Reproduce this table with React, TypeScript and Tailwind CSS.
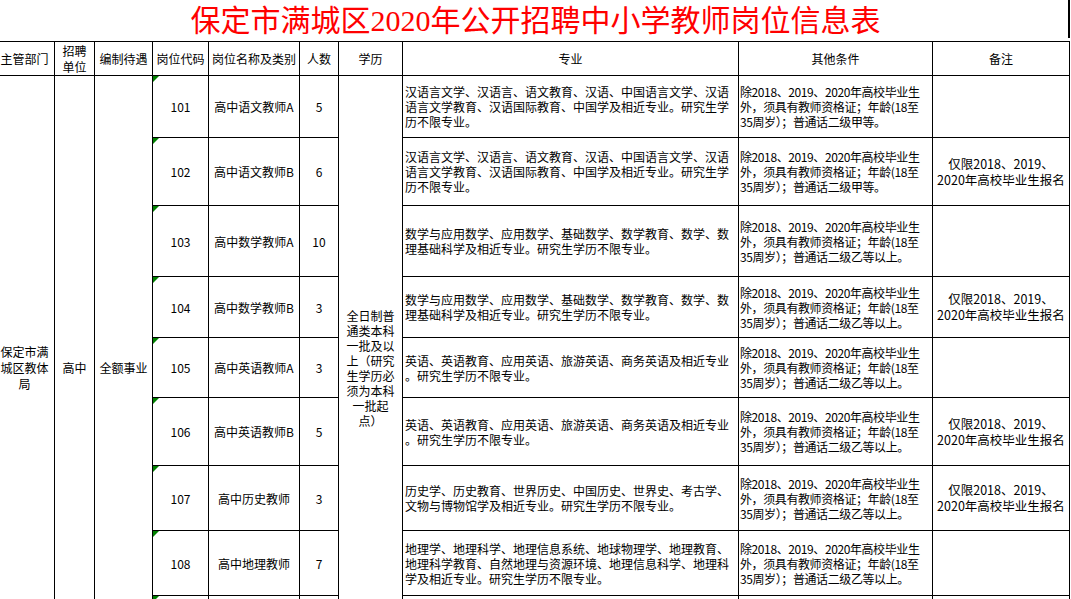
import React from "react";

interface Post {
  code: string;
  name: string;
  count: string;
  major: string[];
  extra: string[];
  note?: string[];
}

const cnFont = { fontFamily: '"Noto Sans CJK SC", "Noto Sans", sans-serif' };

const onlyGrads = ["仅限2018、2019、", "2020年高校毕业生报名"];

const grade = (level: string) => [
  "除2018、2019、2020年高校毕业生",
  "外，须具有教师资格证；年龄(18至",
  `35周岁）；普通话${level}。`,
];

const posts: Post[] = [
  {
    code: "101",
    name: "高中语文教师A",
    count: "5",
    major: [
      "汉语言文学、汉语言、语文教育、汉语、中国语言文学、汉语",
      "语言文学教育、汉语国际教育、中国学及相近专业。研究生学",
      "历不限专业。",
    ],
    extra: grade("二级甲等"),
  },
  {
    code: "102",
    name: "高中语文教师B",
    count: "6",
    major: [
      "汉语言文学、汉语言、语文教育、汉语、中国语言文学、汉语",
      "语言文学教育、汉语国际教育、中国学及相近专业。研究生学",
      "历不限专业。",
    ],
    extra: grade("二级甲等"),
    note: onlyGrads,
  },
  {
    code: "103",
    name: "高中数学教师A",
    count: "10",
    major: [
      "数学与应用数学、应用数学、基础数学、数学教育、数学、数",
      "理基础科学及相近专业。研究生学历不限专业。",
    ],
    extra: grade("二级乙等以上"),
  },
  {
    code: "104",
    name: "高中数学教师B",
    count: "3",
    major: [
      "数学与应用数学、应用数学、基础数学、数学教育、数学、数",
      "理基础科学及相近专业。研究生学历不限专业。",
    ],
    extra: grade("二级乙等以上"),
    note: onlyGrads,
  },
  {
    code: "105",
    name: "高中英语教师A",
    count: "3",
    major: [
      "英语、英语教育、应用英语、旅游英语、商务英语及相近专业",
      "。研究生学历不限专业。",
    ],
    extra: grade("二级乙等以上"),
  },
  {
    code: "106",
    name: "高中英语教师B",
    count: "5",
    major: [
      "英语、英语教育、应用英语、旅游英语、商务英语及相近专业",
      "。研究生学历不限专业。",
    ],
    extra: grade("二级乙等以上"),
    note: onlyGrads,
  },
  {
    code: "107",
    name: "高中历史教师",
    count: "3",
    major: [
      "历史学、历史教育、世界历史、中国历史、世界史、考古学、",
      "文物与博物馆学及相近专业。研究生学历不限专业。",
    ],
    extra: grade("二级乙等以上"),
    note: onlyGrads,
  },
  {
    code: "108",
    name: "高中地理教师",
    count: "7",
    major: [
      "地理学、地理科学、地理信息系统、地球物理学、地理教育、",
      "地理科学教育、自然地理与资源环境、地理信息科学、地理科",
      "学及相近专业。研究生学历不限专业。",
    ],
    extra: grade("二级乙等以上"),
  },
  // next row only shows its top border in the shot
  { code: "", name: "", count: "", major: [], extra: [] },
];

const headers = [
  "主管部门",
  "招聘单位",
  "编制待遇",
  "岗位代码",
  "岗位名称及类别",
  "人数",
  "学历",
  "专业",
  "其他条件",
  "备注",
];

const degree = ["全日制普", "通类本科", "一批及以", "上（研究", "生学历必", "须为本科", "一批起", "点）"];

const Lines = ({ lines }: { lines: string[] }) => (
  <>
    {lines.map((l, i) => (
      <div key={i} className="whitespace-nowrap">
        {l}
      </div>
    ))}
  </>
);

const Corner = () => (
  <svg className="absolute left-0 top-0" width="6" height="6" viewBox="0 0 6 6">
    <polygon points="0,0 6,0 0,6" fill="#008000" />
  </svg>
);

export default function App() {
  return (
    <div className="w-[1071px] h-[599px] overflow-hidden bg-white text-black" style={cnFont}>
      {/* title */}
      <div className="h-[41px] w-[1071px] flex">
        <div className="w-[1068px] flex items-center justify-center">
          <h1
            className="text-[30px] leading-[30px] text-[#ff0000] pl-[3px]"
            style={{ fontFamily: '"Liberation Serif", "Noto Sans CJK SC", serif' }}
          >
            保定市满城区2020年公开招聘中小学教师岗位信息表
          </h1>
        </div>
        <div className="w-[2px] h-[38px] bg-black" />
      </div>

      {/* sheet */}
      <div
        className="grid w-[1070px] gap-px bg-black border-t border-r border-black text-[12px] leading-[15px]
          grid-cols-[54px_39px_57px_55px_90px_38px_63px_335px_193px_136px]
          grid-rows-[33px_61px_67px_70px_60px_59px_67px_64px_64px_63px]"
      >
        {headers.map((h) => (
          <div key={h} className="bg-white flex items-center justify-center text-center">
            {h === "招聘单位" ? (
              <div className="leading-[16px]">
                招聘
                <br />
                单位
              </div>
            ) : h === "主管部门" ? (
              <div className="w-full pr-[5px] whitespace-nowrap">{h}</div>
            ) : (
              h
            )}
          </div>
        ))}

        <div className="bg-white row-span-9 col-start-1 row-start-2 flex items-center">
          <div className="w-full pr-[5px] text-center leading-[16px]">
            保定市满
            <br />
            城区教体
            <br />局
          </div>
        </div>
        <div className="bg-white row-span-9 col-start-2 row-start-2 flex items-center justify-center">
          高中
        </div>
        <div className="bg-white row-span-9 col-start-3 row-start-2 flex items-center justify-center">
          全额事业
        </div>
        <div className="bg-white row-span-9 col-start-7 row-start-2 flex flex-col items-center justify-center text-center">
          <Lines lines={degree} />
        </div>

        {posts.map((p, i) => {
          const row = i + 2;
          return (
            <React.Fragment key={i}>
              <div
                className="bg-white relative col-start-4 flex items-center justify-center"
                style={{ gridRowStart: row }}
              >
                <Corner />
                {p.code}
              </div>
              <div
                className="bg-white col-start-5 flex items-center justify-center whitespace-nowrap"
                style={{ gridRowStart: row }}
              >
                {p.name}
              </div>
              <div
                className="bg-white col-start-6 flex items-center justify-center"
                style={{ gridRowStart: row }}
              >
                {p.count}
              </div>
              <div
                className="bg-white col-start-8 flex flex-col justify-center pl-[2px] overflow-hidden"
                style={{ gridRowStart: row }}
              >
                <Lines lines={p.major} />
              </div>
              <div
                className="bg-white col-start-9 flex flex-col justify-center pl-[1px] overflow-hidden tracking-[-0.4px]"
                style={{ gridRowStart: row }}
              >
                <Lines lines={p.extra} />
              </div>
              <div
                className="bg-white col-start-10 flex flex-col items-center justify-center text-center text-[12.5px] leading-[16px] overflow-hidden"
                style={{ gridRowStart: row }}
              >
                {p.note && <Lines lines={p.note} />}
              </div>
            </React.Fragment>
          );
        })}
      </div>
    </div>
  );
}
